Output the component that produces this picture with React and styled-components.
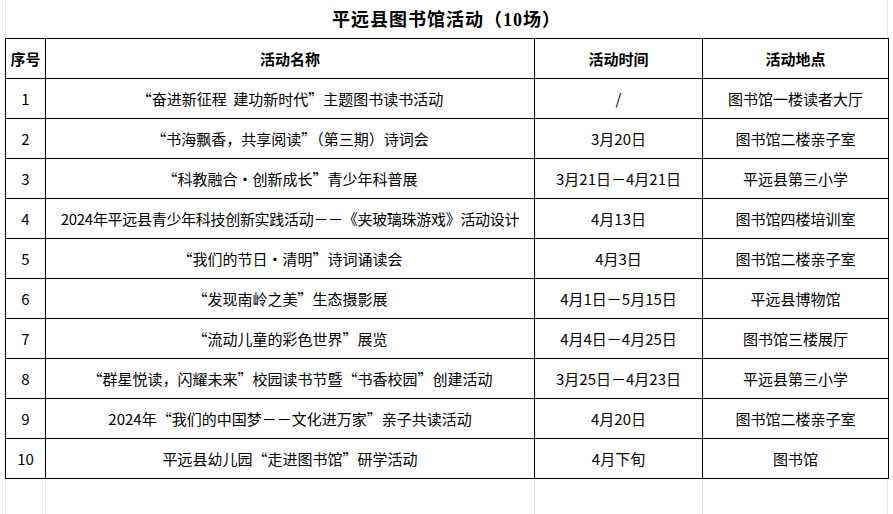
import styled, { createGlobalStyle } from "styled-components";

const GlobalStyle = createGlobalStyle`
  body {
    margin: 0;
    background: #ffffff;
    color: #000000;
    font-family: "Noto Sans CJK SC", sans-serif;
  }
`;

const COLS = [40, 489, 168, 186];
const FAINT = "#e4e4e4";

const Sheet = styled.div`
  padding-left: 5px;
  width: 883px;
`;

const TitleRow = styled.div`
  height: 38px;
  display: flex;
  align-items: center;
  justify-content: center;
  border-left: 1px solid ${FAINT};
  border-right: 1px solid ${FAINT};
  box-sizing: border-box;
`;

const Title = styled.h1`
  margin: 0 0 2px 0;
  font-family: "Liberation Serif", "Noto Sans CJK SC", serif;
  font-size: 18px;
  font-weight: 700;
  letter-spacing: 1px;
`;

const Table = styled.table`
  border-collapse: collapse;
  table-layout: fixed;
  width: 883px;
`;

const HeadCell = styled.th`
  height: 39px;
  padding: 0;
  border: 1px solid #000;
  font-family: "Noto Sans CJK SC", sans-serif;
  font-size: 15px;
  font-weight: 700;
  text-align: center;
`;

const Cell = styled.td`
  height: 39px;
  padding: 0;
  border: 1px solid #000;
  font-family: "Noto Sans CJK SC", sans-serif;
  font-size: 15px;
  font-weight: 400;
  text-align: center;
  white-space: pre;
  letter-spacing: ${(p) => (p.$tight ? "-0.3px" : "0")};
`;

const Filler = styled.div`
  display: grid;
  grid-template-columns: ${COLS.map((c) => c + "px").join(" ")};
  height: 40px;
`;

const FillerCell = styled.div`
  border-left: 1px solid ${FAINT};
  border-right: ${(p) => (p.$last ? `1px solid ${FAINT}` : "none")};
`;

const rows = [
  ["1", "“奋进新征程  建功新时代”主题图书读书活动", "/", "图书馆一楼读者大厅"],
  ["2", "“书海飘香，共享阅读”（第三期）诗词会", "3月20日", "图书馆二楼亲子室"],
  ["3", "“科教融合·创新成长”青少年科普展", "3月21日－4月21日", "平远县第三小学"],
  ["4", "2024年平远县青少年科技创新实践活动－－《夹玻璃珠游戏》活动设计", "4月13日", "图书馆四楼培训室"],
  ["5", "“我们的节日·清明”诗词诵读会", "4月3日", "图书馆二楼亲子室"],
  ["6", "“发现南岭之美”生态摄影展", "4月1日－5月15日", "平远县博物馆"],
  ["7", "“流动儿童的彩色世界”展览", "4月4日－4月25日", "图书馆三楼展厅"],
  ["8", "“群星悦读，闪耀未来”校园读书节暨“书香校园”创建活动", "3月25日－4月23日", "平远县第三小学"],
  ["9", "2024年“我们的中国梦－－文化进万家”亲子共读活动", "4月20日", "图书馆二楼亲子室"],
  ["10", "平远县幼儿园“走进图书馆”研学活动", "4月下旬", "图书馆"],
];

export default function App() {
  return (
    <>
      <GlobalStyle />
      <Sheet>
        <TitleRow>
          <Title>平远县图书馆活动（10场）</Title>
        </TitleRow>
        <Table>
          <colgroup>
            {COLS.map((w, i) => (
              <col key={i} style={{ width: w }} />
            ))}
          </colgroup>
          <thead>
            <tr>
              <HeadCell>序号</HeadCell>
              <HeadCell>活动名称</HeadCell>
              <HeadCell>活动时间</HeadCell>
              <HeadCell>活动地点</HeadCell>
            </tr>
          </thead>
          <tbody>
            {rows.map((r) => (
              <tr key={r[0]}>
                <Cell>{r[0]}</Cell>
                <Cell $tight={r[1].length > 30}>{r[1]}</Cell>
                <Cell>{r[2]}</Cell>
                <Cell>{r[3]}</Cell>
              </tr>
            ))}
          </tbody>
        </Table>
        <Filler>
          {COLS.map((w, i) => (
            <FillerCell key={i} $last={i === COLS.length - 1} />
          ))}
        </Filler>
      </Sheet>
    </>
  );
}
